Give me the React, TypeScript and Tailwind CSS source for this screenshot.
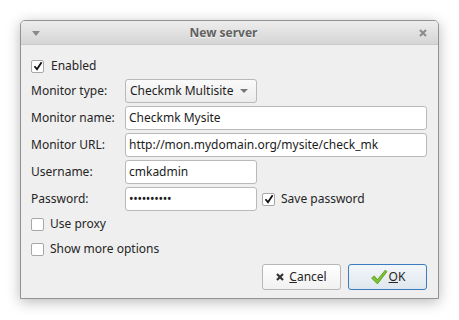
import React from "react";

const font = { fontFamily: '"Noto Sans", "Open Sans", sans-serif' };

function Check({ checked }: { checked?: boolean }) {
  return (
    <span className="flex h-[13px] w-[13px] shrink-0 items-center justify-center rounded-[2px] border border-[#a7a7a7] bg-white">
      {checked && (
        <svg width="10" height="10" viewBox="0 0 10 10">
          <path d="M1.5 5.2 L4 8.3 L8.6 1.2" fill="none" stroke="#111" strokeWidth="1.8" />
        </svg>
      )}
    </span>
  );
}

function Field({ value, className = "" }: { value: string; className?: string }) {
  return (
    <div
      className={`flex h-[24px] items-center whitespace-nowrap rounded-[3px] border border-[#b9b9b9] bg-white px-[3px] text-[12px] text-[#1c1c1c] ${className}`}
    >
      {value}
    </div>
  );
}

function Row({ label, children }: { label: string; children: React.ReactNode }) {
  return (
    <div className="flex items-center">
      <span className="w-[94px] shrink-0 text-[12px] text-[#252525]">{label}</span>
      {children}
    </div>
  );
}

export default function App() {
  return (
    <div className="h-[320px] w-[459px] bg-white pl-[20px] pt-[20px]" style={font}>
      <div className="flex h-[279px] w-[419px] flex-col overflow-hidden rounded-t-[5px] border border-[#929292] bg-[#efefef] shadow-[0_3px_14px_rgba(0,0,0,0.28)]">
        {/* Title bar */}
        <div className="relative flex h-[24px] shrink-0 items-center justify-center border-b border-[#c9c9c9] bg-gradient-to-b from-[#ededed] to-[#d5d5d5] pr-[12px]">
          <svg className="absolute left-[11px] top-[10px]" width="8" height="5" viewBox="0 0 8 5">
            <path d="M0 0 H8 L4 5 Z" fill="#8a8a8a" />
          </svg>
          <span className="text-[12px] font-bold text-[#626262] [text-shadow:0_1px_0_#f6f6f6]">New server</span>
          <svg className="absolute right-[11px] top-[8px]" width="8" height="8" viewBox="0 0 8 8">
            <path d="M1 1 L7 7 M7 1 L1 7" stroke="#8a8a8a" strokeWidth="2" />
          </svg>
        </div>

        {/* Body */}
        <div className="flex flex-1 flex-col pl-[10px] pr-[11px] pt-[14px] pb-[8px]">
          <label className="flex h-[14px] items-center gap-[7px] text-[12px] text-[#252525]">
            <Check checked />
            Enabled
          </label>

          <div className="mt-[6px] flex flex-col gap-[3px]">
            <Row label="Monitor type:">
              <div className="flex h-[24px] w-[132px] items-center justify-between whitespace-nowrap rounded-[3px] border border-[#b9b9b9] bg-gradient-to-b from-[#fafafa] to-[#ececec] pl-[4px] pr-[8px] text-[12px] text-[#1c1c1c]">
                Checkmk Multisite
                <svg width="8" height="4" viewBox="0 0 8 4">
                  <path d="M0 0 H8 L4 4 Z" fill="#777" />
                </svg>
              </div>
            </Row>
            <Row label="Monitor name:">
              <Field value="Checkmk Mysite" className="flex-1" />
            </Row>
            <Row label="Monitor URL:">
              <Field value="http://mon.mydomain.org/mysite/check_mk" className="flex-1" />
            </Row>
            <Row label="Username:">
              <Field value="cmkadmin" className="w-[132px]" />
            </Row>
            <Row label="Password:">
              <Field value="••••••••••" className="w-[132px] text-[9px] tracking-[-0.3px]" />
              <label className="ml-[5px] flex items-center gap-[6px] text-[12px] text-[#252525]">
                <Check checked />
                Save password
              </label>
            </Row>
          </div>

          <label className="mt-[6px] flex h-[14px] items-center gap-[6px] text-[12px] text-[#252525]">
            <Check />
            Use proxy
          </label>
          <label className="mt-[11px] flex h-[14px] items-center gap-[6px] text-[12px] text-[#252525]">
            <Check />
            Show more options
          </label>

          <div className="mt-auto flex justify-end gap-[7px]">
            <button className="flex h-[26px] w-[79px] items-center justify-center gap-[5px] rounded-[3px] border border-[#b7b7b7] bg-gradient-to-b from-[#ffffff] to-[#f1f1f1] text-[12px] text-[#252525]">
              <svg width="8" height="8" viewBox="0 0 8 8">
                <path d="M1 1 L7 7 M7 1 L1 7" stroke="#333" strokeWidth="2.2" />
              </svg>
              <span>
                <span className="underline">C</span>ancel
              </span>
            </button>
            <button className="flex h-[26px] w-[79px] items-center justify-center gap-[1px] rounded-[3px] border border-[#3b7bbf] bg-gradient-to-b from-[#f3f6f9] to-[#dfe7ee] text-[12px] text-[#252525]">
              <svg width="18" height="16" viewBox="0 0 17 15">
                <path d="M1.5 8.5 L4 6.5 L7 10 L14.5 1 L16 2.5 L7 14 Z" fill="#7cc234" stroke="#5a9a1e" strokeWidth="0.8" />
              </svg>
              <span>
                <span className="underline">O</span>K
              </span>
            </button>
          </div>
        </div>
      </div>
    </div>
  );
}
